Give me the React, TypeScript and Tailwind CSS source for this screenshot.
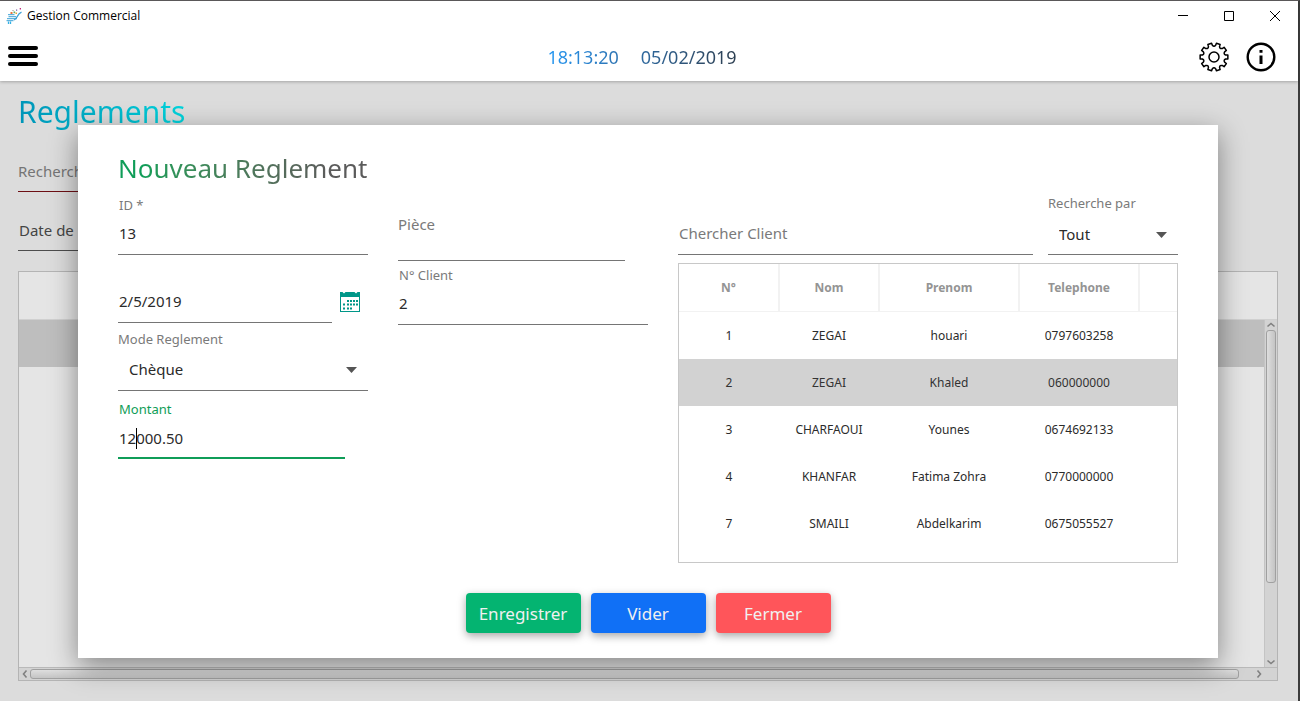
import { useState } from "react";
import type { ReactNode } from "react";

type Client = { id: number; nom: string; prenom: string; telephone: string };

const clients: Client[] = [
  { id: 1, nom: "ZEGAI", prenom: "houari", telephone: "0797603258" },
  { id: 2, nom: "ZEGAI", prenom: "Khaled", telephone: "060000000" },
  { id: 3, nom: "CHARFAOUI", prenom: "Younes", telephone: "0674692133" },
  { id: 4, nom: "KHANFAR", prenom: "Fatima Zohra", telephone: "0770000000" },
  { id: 7, nom: "SMAILI", prenom: "Abdelkarim", telephone: "0675055527" },
];

const inputBase =
  "block h-10 w-full rounded-none border-b border-[#757575] bg-transparent px-px pb-0.5 text-[15px] text-[#2b2b2b] outline-none placeholder:text-[#7a7a7a] placeholder:opacity-100";
const labelBase = "block h-5 px-px text-[13px] leading-5 text-[#7a7a7a]";

function AppLogo() {
  return (
    <svg className="h-4 w-4" viewBox="0 0 16 16" fill="none" aria-hidden="true">
      <path d="M2 6.700h6.500M2.500 8.700h7.500M1 10.700h10M0.500 12.700h7" stroke="#3ba0d6" strokeWidth="1" />
      <path d="M8 12C12 10.500 10.500 6 15.500 4.200" stroke="#3ba0d6" strokeWidth="1.300" />
      <path d="M2.500 13.500v2.500M4.500 13.500v2.500" stroke="#35b0e4" strokeWidth="1.300" />
      <path d="M4.500 4h2v2h-2z" fill="#e9733c" />
      <path d="M7.500 3.500h1.700v1.700h-1.700z" fill="#5cae6e" />
      <path d="M9.500 4.500h1.500v1.500H9.500z" fill="#e7a33c" />
      <path d="M6.500 2h1v1h-1z" fill="#8a8a8a" />
      <path d="M10 1.500h1.200v1.200H10z" fill="#7457a8" />
      <path d="M13.700 0h1.300v1.500h-1.300z" fill="#c2297f" />
    </svg>
  );
}

function polar(radius: number, degrees: number) {
  const angle = (degrees * Math.PI) / 180;
  return `${(15 + radius * Math.sin(angle)).toFixed(2)} ${(15 - radius * Math.cos(angle)).toFixed(2)}`;
}

const gearPath =
  Array.from({ length: 10 }, (_, tooth) => {
    const center = 18 + tooth * 36;
    return [
      `${tooth === 0 ? "M" : "L"}${polar(11.8, center - 10)}`,
      `L${polar(14, center - 8)}`,
      `L${polar(14, center + 8)}`,
      `L${polar(11.8, center + 10)}`,
      `Q${polar(9.8, center + 18)} ${polar(11.8, center + 26)}`,
    ].join("");
  }).join("") + "Z";

function GearIcon() {
  return (
    <svg className="h-[30px] w-[30px]" viewBox="0 0 30 30" fill="none" stroke="#000" strokeWidth="1.500" strokeLinejoin="round" aria-hidden="true">
      <path d={gearPath} />
      <circle cx="15" cy="15" r="5" />
    </svg>
  );
}

function InfoIcon() {
  return (
    <svg className="h-[30px] w-[30px]" viewBox="0 0 30 30" aria-hidden="true">
      <circle cx="15" cy="15" r="13.300" fill="none" stroke="#000" strokeWidth="2.400" />
      <path d="M13.500 8h3v2.800h-3zM13.500 13.500h3v8.500h-3z" />
    </svg>
  );
}

function CalendarIcon() {
  return (
    <svg className="h-5 w-5" viewBox="0 0 20 20" aria-hidden="true">
      <path fill="#009688" d="M0 0h2.500l1.500 1.500L5.500 0h9L16 1.500 17.500 0H20v20H0z" />
      <path fill="#fff" d="M1 5h18v14H1z" />
      <path
        fill="#009688"
        d="M7 8h2v2H7zM10 8h2v2h-2zM13 8h2v2h-2zM16 8h2v2h-2zM3 11.500h2v2H3zM7 11.500h2v2H7zM10 11.500h2v2h-2zM13 11.500h2v2h-2zM16 11.500h2v2h-2zM3 15.500h2v2H3zM7 15.500h2v2H7zM10 15.500h2v2h-2z"
      />
    </svg>
  );
}

function Chevron({ className }: { className: string }) {
  return (
    <svg className={className} viewBox="0 0 10 10" fill="none" stroke="#808080" strokeWidth="1.600" aria-hidden="true">
      <path d="M1.500 6.500 5 3.500 8.500 6.500" />
    </svg>
  );
}

function Dropdown({ id, options, height }: { id: string; options: string[]; height: string }) {
  return (
    <div className="relative">
      <select
        id={id}
        className={`block w-full appearance-none rounded-none border-b border-[#757575] bg-transparent pr-8 pl-[11px] text-[15px] text-[#2b2b2b] outline-none ${height}`}
      >
        {options.map((option) => (
          <option key={option}>{option}</option>
        ))}
      </select>
      <span className="pointer-events-none absolute inset-y-0 right-[11px] flex items-center">
        <svg className="h-[6px] w-[11px]" viewBox="0 0 11 6" aria-hidden="true">
          <path d="M0 0h11L5.500 6z" fill="#555" />
        </svg>
      </span>
    </div>
  );
}

function ActionButton({ color, onClick, children }: { color: string; onClick?: () => void; children: ReactNode }) {
  return (
    <button
      type="button"
      onClick={onClick}
      className={`h-10 w-[115px] rounded-[4px] pt-0.5 text-[17px] text-[#f0f0f0] shadow-[0_3px_8px_rgba(0,0,0,0.35)] ${color}`}
    >
      {children}
    </button>
  );
}

function ClientTable({ selected, onSelect }: { selected: string; onSelect: (id: string) => void }) {
  return (
    <div className="mt-2 h-[300px] border border-[#c8c8c8]">
      <table className="w-full table-fixed border-collapse text-center text-[12px] [&_td]:pt-0.5 [&_th]:pt-0.5">
        <colgroup>
          <col className="w-[100px]" />
          <col className="w-[100px]" />
          <col className="w-[140px]" />
          <col className="w-[120px]" />
          <col />
        </colgroup>
        <thead>
          <tr className="h-12 border-b border-[#f2f2f2] text-[#949494]">
            {["N°", "Nom", "Prenom", "Telephone"].map((title) => (
              <th key={title} className="border-r-2 border-[#f2f2f2] font-bold">
                {title}
              </th>
            ))}
            <td />
          </tr>
        </thead>
        <tbody>
          {clients.map((client) => (
            <tr
              key={client.id}
              onClick={() => onSelect(String(client.id))}
              className={
                selected === String(client.id) ? "h-[47px] bg-[#d2d2d2] text-[#333]" : "h-[47px] text-[#2b2b2b]"
              }
            >
              <td>{client.id}</td>
              <td>{client.nom}</td>
              <td>{client.prenom}</td>
              <td>{client.telephone}</td>
              <td />
            </tr>
          ))}
        </tbody>
      </table>
    </div>
  );
}

function PaymentDialog() {
  const [clientId, setClientId] = useState("2");
  const [amount, setAmount] = useState("12000.50");
  const [piece, setPiece] = useState("");

  return (
    <div
      role="dialog"
      aria-labelledby="dialog-title"
      className="w-full bg-white px-10 pt-5 pb-[25px] shadow-[0_8px_26px_rgba(0,0,0,0.42)]"
    >
      <h2 id="dialog-title" className="h-[50px] text-[26px] leading-[46px]">
        <span className="bg-linear-to-r from-[#0f9d58] from-10% to-[#5b5b5b] to-85% bg-clip-text text-transparent">
          Nouveau Reglement
        </span>
      </h2>

      <div className="grid grid-cols-[1fr_1fr_2fr] gap-[30px]">
        <div>
          <label htmlFor="payment-id" className={labelBase}>ID *</label>
          <input id="payment-id" className={inputBase} defaultValue="13" />

          <div className="mt-7 flex items-center gap-2">
            <input aria-label="Date" className={`${inputBase} min-w-0 flex-1 border-[#4d4d4d]`} defaultValue="2/5/2019" />
            <button type="button" aria-label="Choisir une date" className="mr-2 pb-0.5">
              <CalendarIcon />
            </button>
          </div>

          <label htmlFor="payment-mode" className="mt-[6px] block h-5 text-[13px] leading-5 text-[#7a7a7a]">Mode Reglement</label>
          <Dropdown id="payment-mode" options={["Chèque", "Espèces"]} height="h-[42px]" />

          <div className="relative mt-2 w-[227px]">
            <label htmlFor="amount" className="block h-5 px-px text-[13px] leading-5 text-[#0f9d58]">Montant</label>
            <input
              id="amount"
              className="block h-10 w-full rounded-none border-b-2 border-[#0f9d58] px-px text-[15px] text-[#2b2b2b] outline-none"
              value={amount}
              onChange={(event) => setAmount(event.target.value)}
            />
            <span className="absolute bottom-[10px] left-[18px] h-[21px] w-px bg-black" />
          </div>
        </div>

        <div>
          <input
            aria-label="Pièce"
            placeholder="Pièce"
            value={piece}
            onChange={(event) => setPiece(event.target.value)}
            className="mt-[10px] block h-14 w-[227px] rounded-none border-b border-[#757575] pb-4 text-[15px] text-[#2b2b2b] outline-none placeholder:text-[#7a7a7a] placeholder:opacity-100"
          />
          <label htmlFor="client-id" className={`${labelBase} mt-1`}>N° Client</label>
          <input
            id="client-id"
            className={inputBase}
            value={clientId}
            onChange={(event) => setClientId(event.target.value)}
          />
        </div>

        <div>
          <div className="flex items-end gap-[15px]">
            <input aria-label="Chercher Client" placeholder="Chercher Client" className={`${inputBase} min-w-0 flex-1`} />
            <div className="w-[130px]">
              <label htmlFor="search-by" className="block h-5 text-[13px] leading-4 text-[#7a7a7a]">Recherche par</label>
              <Dropdown id="search-by" options={["Tout", "Nom", "Prenom"]} height="h-10" />
            </div>
          </div>
          <ClientTable selected={clientId} onSelect={setClientId} />
        </div>
      </div>

      <div className="mt-[30px] flex justify-center gap-[10px]">
        <ActionButton color="bg-[#04b471]">Enregistrer</ActionButton>
        <ActionButton
          color="bg-[#1070f6]"
          onClick={() => {
            setAmount("");
            setPiece("");
          }}
        >
          Vider
        </ActionButton>
        <ActionButton color="bg-[#ff555a]">Fermer</ActionButton>
      </div>
    </div>
  );
}

function PaymentsPage() {
  return (
    <div className="flex flex-1 flex-col pr-5 pb-5 pl-[18px]">
      <h1 className="h-[71px] text-[30px] leading-[62px]">
        <span className="bg-linear-to-r from-[#0095b8] to-[#00d4dc] bg-clip-text text-transparent">Reglements</span>
      </h1>
      <input
        aria-label="Recherche"
        placeholder="Recherche"
        className="h-10 w-60 rounded-none border-b border-[#6d0f14] pb-0.5 text-[15px] outline-none placeholder:text-[#757575] placeholder:opacity-100"
      />
      <input
        aria-label="Date de reglement"
        placeholder="Date de reglement"
        className="mt-[19px] h-10 w-60 rounded-none border-b border-[#4d4d4d] px-px pb-0.5 text-[15px] outline-none placeholder:text-[#444] placeholder:opacity-100"
      />
      <div className="mt-5 flex flex-1 flex-col border border-[#b4b4b4] bg-[#e5e5e5]">
        <div className="h-12 border-b border-[#d0d0d0]" />
        <div className="flex flex-1">
          <div className="flex-1">
            <div className="h-[47px] bg-[#bebebe]" />
          </div>
          <div className="flex w-[13px] flex-col items-center border-l border-[#c4c4c4] bg-[#d3d3d3]">
            <Chevron className="h-[10px] w-[10px]" />
            <div className="flex w-full flex-1 flex-col px-px">
              <div className="grow-[252] rounded-[3px] border border-[#a0a0a0] bg-linear-to-r from-[#dedede] to-[#c4c4c4]" />
              <div className="grow-[74]" />
            </div>
            <Chevron className="h-[10px] w-[10px] rotate-180" />
          </div>
        </div>
        <div className="flex h-[13px] items-center border-t border-[#b9b9b9] bg-[#d3d3d3] pr-[13px] pl-px">
          <Chevron className="h-[10px] w-[10px] -rotate-90" />
          <div className="flex h-full flex-1 py-px">
            <div className="grow-[1209] rounded-[3px] border border-[#a0a0a0] bg-linear-to-b from-[#dedede] to-[#c4c4c4]" />
            <div className="grow-[15]" />
          </div>
          <Chevron className="h-[10px] w-[10px] rotate-90" />
        </div>
      </div>
    </div>
  );
}

export default function App() {
  return (
    <div className="flex min-h-screen flex-col border-t border-r-2 border-t-[#5f5c5d] border-r-[#3c3c3c] bg-[#dcdcdc] font-['Noto_Sans',sans-serif]">
      <header className="relative z-10 bg-white shadow-[0_1px_3px_rgba(0,0,0,0.25)]">
        <div className="flex h-[30px] items-center pl-[6px]">
          <AppLogo />
          <span className="ml-[5px] flex-1 font-['Open_Sans',sans-serif] text-[12px] text-black">Gestion Commercial</span>
          <button type="button" aria-label="Réduire" className="flex h-full w-[46px] items-center justify-center">
            <svg className="h-[10px] w-[10px]" viewBox="0 0 10 10" aria-hidden="true">
              <path d="M0 4h10v1H0z" />
            </svg>
          </button>
          <button type="button" aria-label="Agrandir" className="flex h-full w-[46px] items-center justify-center">
            <svg className="h-[10px] w-[10px]" viewBox="0 0 10 10" fill="none" stroke="#000" aria-hidden="true">
              <path d="M.5.5h9v9h-9z" />
            </svg>
          </button>
          <button type="button" aria-label="Fermer la fenêtre" className="flex h-full w-[46px] items-center justify-center">
            <svg className="h-[10px] w-[10px]" viewBox="0 0 10 10" fill="none" stroke="#000" aria-hidden="true">
              <path d="M0 0l10 10M10 0 0 10" />
            </svg>
          </button>
        </div>
        <div className="grid h-[50px] grid-cols-[1fr_auto_1fr] items-center pr-[22px] pl-2">
          <button type="button" aria-label="Menu" className="flex w-[30px] flex-col gap-1">
            <span className="h-1 w-full rounded-full bg-black" />
            <span className="h-1 w-full rounded-full bg-black" />
            <span className="h-1 w-full rounded-full bg-black" />
          </button>
          <p className="flex gap-[22px] bg-linear-to-r from-[#2196f3] to-[#2c3e50] bg-clip-text pt-0.5 text-[18px] text-transparent">
            <time>18:13:20</time>
            <time>05/02/2019</time>
          </p>
          <div className="flex justify-end gap-[17px] pt-0.5">
            <button type="button" aria-label="Paramètres"><GearIcon /></button>
            <button type="button" aria-label="Informations"><InfoIcon /></button>
          </div>
        </div>
      </header>
      <main className="relative flex flex-1 flex-col">
        <PaymentsPage />
        <div className="absolute inset-0 flex items-center pr-20 pl-[78px]">
          <PaymentDialog />
        </div>
      </main>
    </div>
  );
}
